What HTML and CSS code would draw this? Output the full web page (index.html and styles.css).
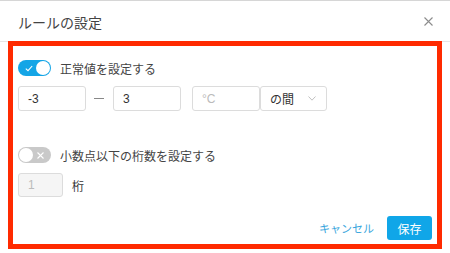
FILE: index.html
```html
<!DOCTYPE html>
<html lang="ja">
<head>
    <meta charset="UTF-8">
    <title>ルールの設定</title>
    <link rel="stylesheet" href="styles.css">
</head>
<body>
    <div class="dialog">
        <div class="dialog-header">
            <span class="dialog-title">ルールの設定</span>
            <span class="dialog-close">
                <svg width="9" height="9" viewBox="0 0 9 9"><path d="M0.5 0.5 L8.5 8.5 M8.5 0.5 L0.5 8.5" stroke="#8c8c8c" stroke-width="1.1" fill="none"/></svg>
            </span>
        </div>

        <div class="dialog-body">
            <!-- 正常値 -->
            <div class="switch-row">
                <span class="switch on">
                    <svg class="switch-icon" width="8" height="7" viewBox="0 0 8 7"><path d="M0.8 3.6 L3 5.6 L7.2 1" stroke="#fff" stroke-width="1.1" fill="none"/></svg>
                    <span class="knob"></span>
                </span>
                <span class="switch-label">正常値を設定する</span>
            </div>
            <div class="field-row">
                <div class="input w68">-3</div>
                <span class="dash"></span>
                <div class="input w68">3</div>
                <div class="input w68 placeholder unit">°C</div>
                <div class="input select">
                    <span>の間</span>
                    <svg width="8" height="5" viewBox="0 0 8 5"><path d="M0.5 0.5 L4 4.2 L7.5 0.5" stroke="#c0c0c0" stroke-width="1" fill="none"/></svg>
                </div>
            </div>

            <!-- 小数点 -->
            <div class="switch-row second">
                <span class="switch off">
                    <span class="knob"></span>
                    <svg class="switch-icon" width="7" height="7" viewBox="0 0 7 7"><path d="M0.5 0.5 L6.5 6.5 M6.5 0.5 L0.5 6.5" stroke="#fff" stroke-width="1.1" fill="none"/></svg>
                </span>
                <span class="switch-label">小数点以下の桁数を設定する</span>
            </div>
            <div class="field-row">
                <div class="input disabled w45">1</div>
                <span class="unit-label">桁</span>
            </div>

            <div class="dialog-footer">
                <button class="btn-link">キャンセル</button>
                <button class="btn-primary">保存</button>
            </div>
        </div>

        <!-- 注釈の枠 -->
        <div class="highlight"></div>
    </div>
</body>
</html>
```

FILE: styles.css
```css
body {
    margin: 0;
    font-family: "Liberation Sans", "Noto Sans CJK JP", sans-serif;
    color: #333;
    background: #fff;
}

.dialog {
    position: relative;
    width: 450px;
    height: 253px;
    border-top: 1px solid #d6d6d6;
    box-sizing: border-box;
}

.dialog-header {
    height: 41px;
    padding: 0 17px 0 18px;
    display: flex;
    align-items: center;
    justify-content: space-between;
    border-bottom: 1px solid #e6e6e6;
    box-sizing: border-box;
}

.dialog-title {
    font-size: 14px;
    color: #444;
    margin-top: 1px;
}

.dialog-close {
    display: flex;
    margin-top: 1px;
}

.dialog-body {
    padding: 18px 18px 0 18px;
}

.switch-row {
    display: flex;
    align-items: center;
    height: 16px;
}

.switch-row.second {
    margin-top: 36px;
}

.switch {
    width: 33px;
    height: 16px;
    border-radius: 8px;
    display: flex;
    align-items: center;
    justify-content: space-between;
    padding: 0 1px;
    box-sizing: border-box;
}

.switch.on {
    background: #14a5e6;
    padding-left: 7px;
}

.switch.off {
    background: #c9c9c9;
    padding-right: 7px;
}

.knob {
    width: 14px;
    height: 14px;
    border-radius: 50%;
    background: #fff;
}

.switch-icon {
    display: block;
}

.switch-label {
    font-size: 12px;
    margin-left: 9px;
    color: #444;
}

.field-row {
    display: flex;
    align-items: center;
    margin-top: 10px;
}

.input {
    height: 25px;
    border: 1px solid #dcdcdc;
    border-radius: 3px;
    box-sizing: border-box;
    font-size: 12px;
    padding-left: 9px;
    display: flex;
    align-items: center;
    color: #333;
}

.w68 {
    width: 68px;
}

.w45 {
    width: 45px;
    height: 24px;
}

.dash {
    width: 10px;
    height: 1px;
    background: #888;
    margin: 0 9px 0 8px;
}

.placeholder {
    color: #bbb;
}

.unit {
    margin-left: 11px;
}

.select {
    width: 67px;
    padding-right: 10px;
    justify-content: space-between;
}

.disabled {
    background: #f5f5f5;
    color: #bbb;
}

.unit-label {
    font-size: 12px;
    margin-left: 9px;
}

.dialog-footer {
    display: flex;
    justify-content: flex-end;
    align-items: center;
    margin-top: 19px;
}

.btn-link {
    border: none;
    background: none;
    font-family: inherit;
    font-size: 11px;
    color: #3aa6dd;
    padding: 0;
    margin-right: 13px;
}

.btn-primary {
    border: none;
    background: #10a6e8;
    color: #fff;
    font-family: inherit;
    font-size: 12px;
    width: 45px;
    height: 24px;
    border-radius: 3px;
}

.highlight {
    position: absolute;
    left: 8px;
    top: 40px;
    width: 434px;
    height: 208px;
    border: 5px solid #ff2a00;
    box-sizing: border-box;
    pointer-events: none;
}
```
